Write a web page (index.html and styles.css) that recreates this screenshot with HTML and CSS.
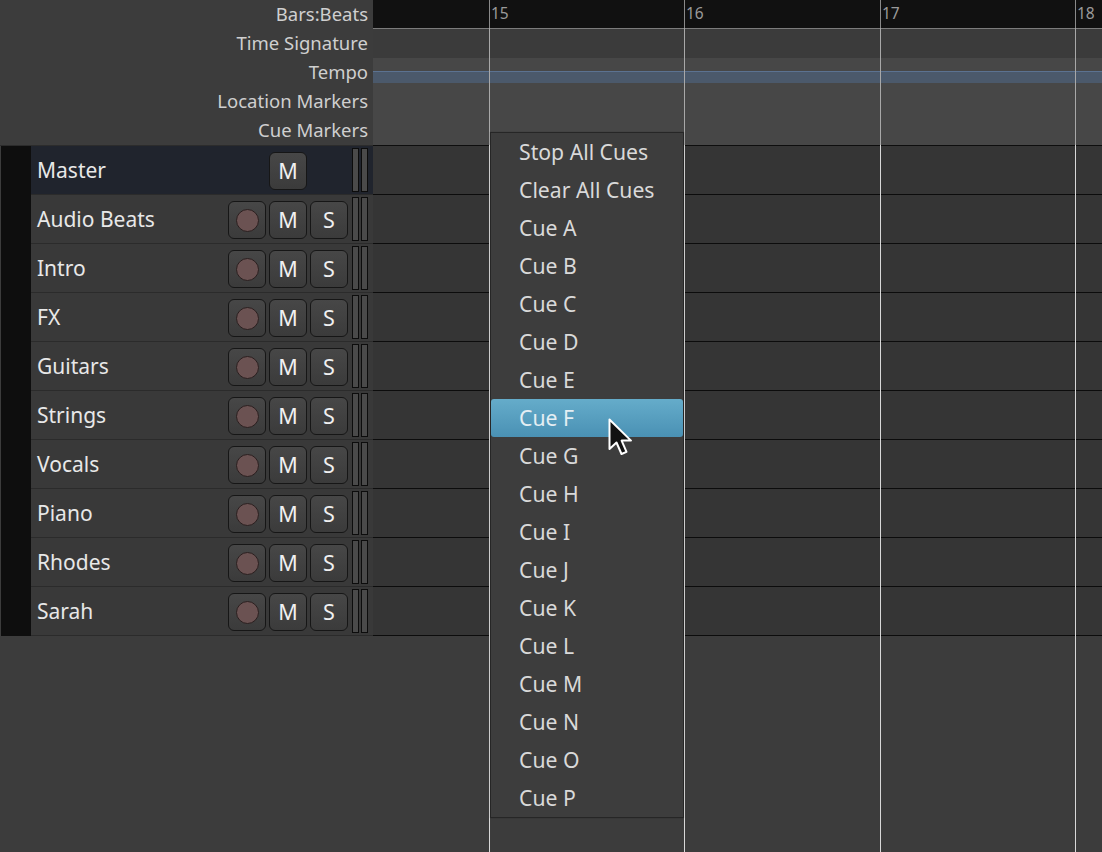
FILE: index.html
```html
<!DOCTYPE html>
<html>
<head>
<meta charset="utf-8">
<link rel="stylesheet" href="styles.css">
</head>
<body>
<div class="app">
  <div class="left">
    <div class="ruler-labels">
      <div class="rl">Bars:Beats</div>
      <div class="rl">Time Signature</div>
      <div class="rl">Tempo</div>
      <div class="rl">Location Markers</div>
      <div class="rl">Cue Markers</div>
    </div>
    <div class="tracks">
      <div class="strip"></div>
      <div class="rows">
        <div class="row master">
          <span class="name">Master</span>
          <div class="btns"><button class="b">M</button></div>
          <div class="meter"><i></i><i></i></div>
        </div>
        <div class="row"><span class="name">Audio Beats</span><div class="btns"><button class="b rec"><span class="dot"></span></button><button class="b">M</button><button class="b">S</button></div><div class="meter"><i></i><i></i></div></div>
        <div class="row"><span class="name">Intro</span><div class="btns"><button class="b rec"><span class="dot"></span></button><button class="b">M</button><button class="b">S</button></div><div class="meter"><i></i><i></i></div></div>
        <div class="row"><span class="name">FX</span><div class="btns"><button class="b rec"><span class="dot"></span></button><button class="b">M</button><button class="b">S</button></div><div class="meter"><i></i><i></i></div></div>
        <div class="row"><span class="name">Guitars</span><div class="btns"><button class="b rec"><span class="dot"></span></button><button class="b">M</button><button class="b">S</button></div><div class="meter"><i></i><i></i></div></div>
        <div class="row"><span class="name">Strings</span><div class="btns"><button class="b rec"><span class="dot"></span></button><button class="b">M</button><button class="b">S</button></div><div class="meter"><i></i><i></i></div></div>
        <div class="row"><span class="name">Vocals</span><div class="btns"><button class="b rec"><span class="dot"></span></button><button class="b">M</button><button class="b">S</button></div><div class="meter"><i></i><i></i></div></div>
        <div class="row"><span class="name">Piano</span><div class="btns"><button class="b rec"><span class="dot"></span></button><button class="b">M</button><button class="b">S</button></div><div class="meter"><i></i><i></i></div></div>
        <div class="row"><span class="name">Rhodes</span><div class="btns"><button class="b rec"><span class="dot"></span></button><button class="b">M</button><button class="b">S</button></div><div class="meter"><i></i><i></i></div></div>
        <div class="row"><span class="name">Sarah</span><div class="btns"><button class="b rec"><span class="dot"></span></button><button class="b">M</button><button class="b">S</button></div><div class="meter"><i></i><i></i></div></div>
      </div>
    </div>
  </div>

  <div class="timeline">
    <div class="r-bars"></div>
    <div class="r-tsig"></div>
    <div class="r-markers">
      <div class="tempo-band"></div>
    </div>
    <div class="lanes">
      <div class="lane"></div><div class="lane"></div><div class="lane"></div><div class="lane"></div><div class="lane"></div>
      <div class="lane"></div><div class="lane"></div><div class="lane"></div><div class="lane"></div><div class="lane"></div>
    </div>

    <div class="gl" style="left:116px"></div>
    <div class="gl" style="left:311px"></div>
    <div class="gl" style="left:507px"></div>
    <div class="gl" style="left:702px"></div>
    <span class="bar-num" style="left:118px">15</span>
    <span class="bar-num" style="left:313px">16</span>
    <span class="bar-num" style="left:509px">17</span>
    <span class="bar-num" style="left:704px">18</span>

    <div class="menu">
      <div class="mi">Stop All Cues</div>
      <div class="mi">Clear All Cues</div>
      <div class="mi">Cue A</div>
      <div class="mi">Cue B</div>
      <div class="mi">Cue C</div>
      <div class="mi">Cue D</div>
      <div class="mi">Cue E</div>
      <div class="mi active">Cue F</div>
      <div class="mi">Cue G</div>
      <div class="mi">Cue H</div>
      <div class="mi">Cue I</div>
      <div class="mi">Cue J</div>
      <div class="mi">Cue K</div>
      <div class="mi">Cue L</div>
      <div class="mi">Cue M</div>
      <div class="mi">Cue N</div>
      <div class="mi">Cue O</div>
      <div class="mi">Cue P</div>
    </div>

    <svg class="cursor" width="28" height="42" viewBox="0 0 28 42">
      <path d="M1.5 1.5 L1.5 31 L8.5 24.5 L13.5 36 L18.5 33.8 L13.6 22.6 L23 22.6 Z" fill="#111" stroke="#fff" stroke-width="2" stroke-linejoin="round"/>
    </svg>
  </div>
</div>
</body>
</html>
```

FILE: styles.css
```css
* { box-sizing: border-box; }
html, body {
  margin: 0;
  padding: 0;
  background: #3c3c3c;
  width: 1102px;
  height: 852px;
  overflow: hidden;
  font-family: "Noto Sans", "Open Sans", sans-serif;
}
.app {
  display: flex;
  height: 852px;
}
.left {
  width: 373px;
  flex: none;
  display: flex;
  flex-direction: column;
}
.ruler-labels {
  height: 146px;
  display: flex;
  flex-direction: column;
  border-bottom: 1px solid #2c2c2c;
}
.rl {
  height: 29px;
  line-height: 28px;
  text-align: right;
  padding-right: 5px;
  color: #cfcfcf;
  font-size: 18.5px;
}
.tracks {
  display: flex;
  padding-left: 1px;
}
.strip {
  width: 30px;
  background: #0e0e0e;
}
.rows {
  flex: 1;
  display: flex;
  flex-direction: column;
}
.row {
  height: 49px;
  display: flex;
  align-items: center;
  background: #393939;
  border-bottom: 1px solid #2b2b2b;
  padding-left: 6px;
  padding-right: 5px;
}
.row.master { background: #20242d; }
.name {
  flex: 1;
  color: #e8e8e8;
  font-size: 21px;
}
.btns {
  display: flex;
  gap: 3px;
  align-items: center;
  padding-top: 2px;
}
.b {
  width: 38px;
  height: 38px;
  border: 1px solid #161616;
  border-radius: 6px;
  background: linear-gradient(#474747, #3b3b3b);
  color: #f0f0f0;
  font-family: "Noto Sans", sans-serif;
  font-size: 21.5px;
  padding: 0;
  display: flex;
  align-items: center;
  justify-content: center;
  line-height: 1;
}
.master .b { margin-right: 41px; }
.dot {
  width: 23px;
  height: 23px;
  border-radius: 50%;
  background: #6b5252;
  border: 1px solid #2a1f1f;
}
.meter {
  display: flex;
  gap: 2px;
  margin-left: 4px;
  height: 44px;
}
.meter i {
  display: block;
  width: 7px;
  height: 44px;
  background: #4a4a4a;
  border: 1px solid #0c0c0c;
}

.timeline {
  position: relative;
  flex: 1;
  overflow: hidden;
}
.r-bars {
  height: 29px;
  background: #111111;
  border-bottom: 1px solid #7c7c7c;
}
.r-tsig {
  height: 29px;
  background: #3b3b3b;
}
.r-markers {
  height: 88px;
  background: #474747;
  border-bottom: 1px solid #0e0e0e;
  padding-top: 13px;
}
.tempo-band {
  height: 12px;
  background: #4b596b;
  border-top: 1px solid #5b7291;
}
.lanes {
  display: flex;
  flex-direction: column;
}
.lane {
  height: 49px;
  background: #353535;
  border-bottom: 1px solid #0c0c0c;
}
.gl {
  position: absolute;
  top: 0;
  width: 1px;
  height: 852px;
  background: linear-gradient(#8a8a8a 0 28px, #a8a8a8 28px 145px, #d8d8d8 145px);
}
.bar-num {
  position: absolute;
  top: 3px;
  font-size: 15.5px;
  color: #9a9a9a;
  line-height: 20px;
}
.menu {
  position: absolute;
  left: 117px;
  top: 132px;
  width: 194px;
  background: #3d3d3d;
  border: 1px solid #262626;
  display: flex;
  flex-direction: column;
  box-shadow: 0 0 1px rgba(0,0,0,0.3);
}
.mi {
  height: 38px;
  line-height: 38px;
  padding-left: 28px;
  color: #d9d9d9;
  font-size: 21.2px;
  border-radius: 3px;
}
.mi.active {
  background: linear-gradient(#65acca, #4a91b4);
  color: #e4eef3;
}
.cursor {
  position: absolute;
  left: 235px;
  top: 418px;
}
```
